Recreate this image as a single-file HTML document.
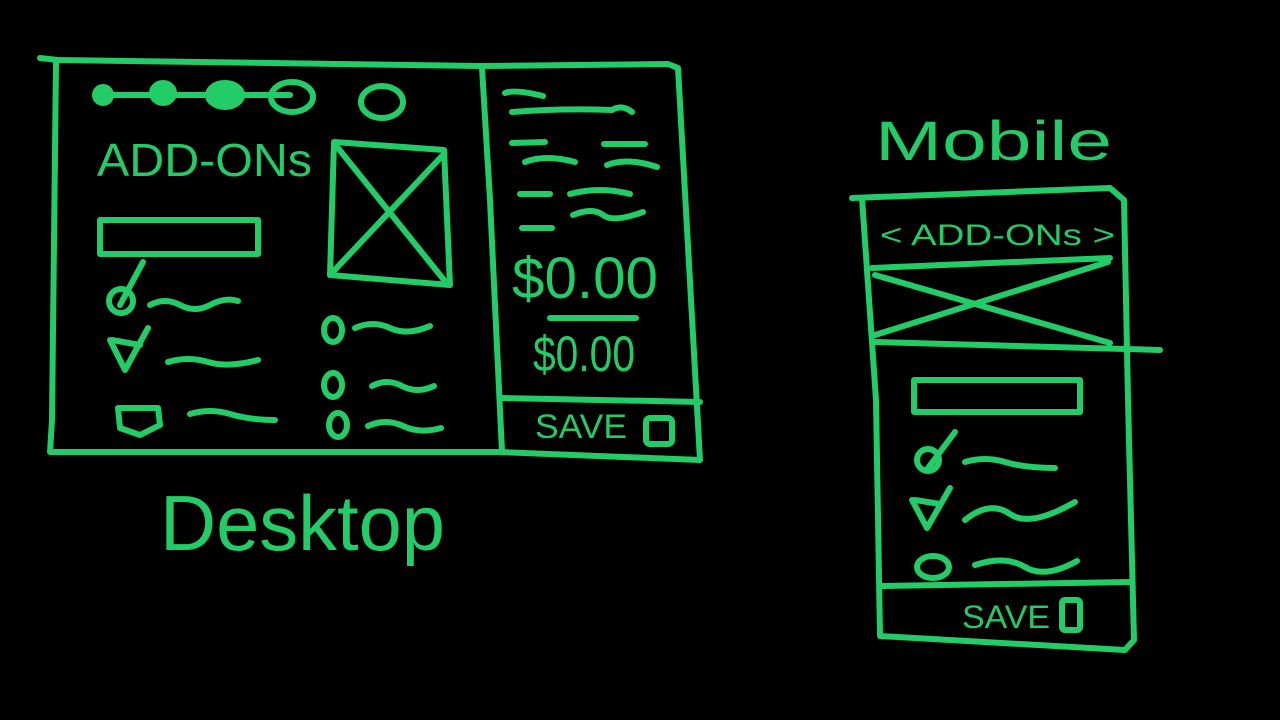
<!DOCTYPE html>
<html><head><meta charset="utf-8"><style>
html,body{margin:0;padding:0;background:#000;width:1280px;height:720px;overflow:hidden}
svg{display:block}
text{font-family:"Liberation Sans",sans-serif;fill:#22cc66}
</style></head><body>
<svg width="1280" height="720" viewBox="0 0 1280 720" fill="none" stroke="#22cc66" stroke-width="6" stroke-linecap="round" stroke-linejoin="round">
<!-- desktop frame -->
<path d="M40 58 L58 60 L480 66 L668 64 L678 68 L700 460 L500 452 L50 452 L52 420 L56 62"/>
<path d="M482 68 L490 200 L502 452"/>
<path d="M502 398 L700 402"/>
<!-- progress -->
<path d="M100 95 L290 95"/>
<circle cx="103" cy="95" r="8" fill="#22cc66"/>
<ellipse cx="163" cy="93" rx="11" ry="10" fill="#22cc66"/>
<ellipse cx="225" cy="95" rx="17" ry="12" fill="#22cc66"/>
<ellipse cx="292" cy="97" rx="21" ry="15"/>
<ellipse cx="382" cy="102" rx="21" ry="16"/>
<text x="97" y="176" font-size="46" stroke="none" textLength="215" lengthAdjust="spacingAndGlyphs">ADD-ONs</text>
<!-- image -->
<path d="M334 142 L444 150 L450 285 L330 275 Z"/>
<path d="M338 148 L444 280 M442 156 L330 275"/>
<rect x="100" y="220" width="158" height="34"/>
<!-- checkboxes -->
<path d="M143 262 L120 305"/><circle cx="121" cy="301" r="12"/>
<path d="M150 305 q15 -8 30 0 t30 0 t28 -4"/>
<path d="M110 340 L125 370 L148 328"/><path d="M112 340 L140 345"/>
<path d="M168 362 q20 -6 40 0 t50 -2"/>
<path d="M118 408 L158 408 L160 425 L140 435 L120 428 Z"/>
<path d="M190 414 q20 -6 40 0 t45 6"/>
<ellipse cx="333" cy="330" rx="9" ry="12"/><path d="M355 328 q18 -8 35 0 t40 -2"/>
<ellipse cx="333" cy="385" rx="9" ry="12"/><path d="M372 386 q15 -8 30 0 t32 0"/>
<ellipse cx="338" cy="425" rx="9" ry="12"/><path d="M368 426 q18 -8 35 0 t38 2"/>
<!-- summary lines -->
<path d="M505 93 q10 -4 38 3"/>
<path d="M512 112 q50 -4 100 -2 q10 -6 20 2"/>
<path d="M512 143 L545 142 M604 144 L645 144"/>
<path d="M525 162 q20 -8 50 0 M607 165 q20 -8 50 2"/>
<path d="M520 194 L550 194 M570 194 q30 -8 60 0"/>
<path d="M573 215 q20 -8 30 0 t40 -3"/>
<path d="M522 228 L552 228"/>
<text x="512" y="298" font-size="58" stroke="none" textLength="146" lengthAdjust="spacingAndGlyphs">$0.00</text>
<path d="M550 318 L636 318"/>
<text x="533" y="371" font-size="50" stroke="none" textLength="102" lengthAdjust="spacingAndGlyphs">$0.00</text>
<text x="535" y="438" font-size="34" stroke="none" textLength="92" lengthAdjust="spacingAndGlyphs">SAVE</text>
<rect x="646" y="418" width="26" height="26" rx="4"/>
<text x="160" y="550" font-size="78" stroke="none" textLength="285" lengthAdjust="spacingAndGlyphs">Desktop</text>
<!-- mobile -->
<text x="875" y="160" font-size="56" stroke="none" textLength="237" lengthAdjust="spacingAndGlyphs">Mobile</text>
<path d="M852 198 L1110 188 L1124 200 L1128 400 L1134 640 L1125 650 L880 636 L876 400 L862 198"/>
<text x="880" y="245" font-size="30" stroke="none" textLength="235" lengthAdjust="spacingAndGlyphs">&lt; ADD-ONs &gt;</text>
<path d="M872 268 L1110 258 M875 275 L1110 343 M1108 262 L875 335 M875 342 L1160 350"/>
<rect x="914" y="380" width="166" height="32"/>
<path d="M955 432 L928 468"/><circle cx="928" cy="460" r="11"/>
<path d="M965 462 q20 -6 40 0 t50 6"/>
<path d="M912 500 L927 528 L950 488"/><path d="M915 500 L940 504"/>
<path d="M965 520 q25 -20 45 -6 t65 -12"/>
<ellipse cx="933" cy="567" rx="16" ry="11"/><path d="M975 565 q30 -10 50 2 t52 -6"/>
<path d="M880 586 L1130 582"/>
<text x="962" y="628" font-size="32" stroke="none" textLength="88" lengthAdjust="spacingAndGlyphs">SAVE</text>
<rect x="1062" y="600" width="18" height="30" rx="3"/>
</svg>
</body></html>
